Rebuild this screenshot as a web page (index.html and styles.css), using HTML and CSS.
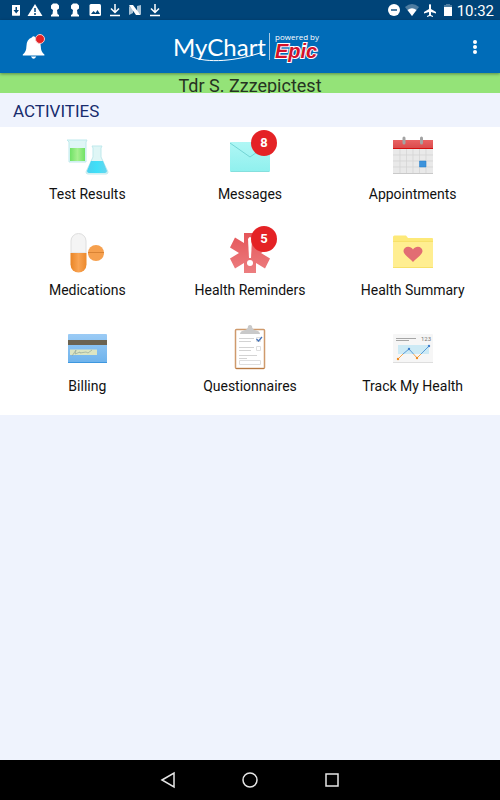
FILE: index.html
```html
<!DOCTYPE html>
<html lang="en">
  <head>
    <meta charset="UTF-8" />
    <meta name="viewport" content="width=device-width, initial-scale=1.0" />
    <title>MyChart</title>
    <link rel="stylesheet" href="styles.css">
  </head>
  <body>
    <!-- Status bar -->
    <div class="status-bar">
      <div class="status-left">
        <svg viewBox="0 0 20 20"><path fill="#fff" fill-rule="evenodd" d="M7 5h8v10.500H12V6zM7 5h5v1H12v9.500H7z" /><rect x="7" y="5" width="8" height="10.500" rx="1" fill="#fff" transform="translate(0 0)" /><path fill="#004478" d="M10.500 7h1.500v3h2l-2.800 3.500L8.500 10h2z" /></svg>
        <svg viewBox="0 0 20 20"><path fill="#fff" d="M10 4l6.500 12h-13z" transform="translate(-1.500 0) scale(1.150 1)" /><path stroke="#004478" stroke-width="1.500" d="M10 8v4M10 13v2" /></svg>
        <svg viewBox="0 0 20 20"><path fill="#fff" d="M8 3.500h4l2 2v3l-2 1.500.5 4 1.500 1v1.500H6V15l1.500-1 .5-4-2-1.500v-3z" /></svg>
        <svg viewBox="0 0 20 20"><path fill="#fff" d="M8 3.500h4l2 2v3l-2 1.500.5 4 1.500 1v1.500H6V15l1.500-1 .5-4-2-1.500v-3z" /></svg>
        <svg viewBox="0 0 20 20"><rect x="4.500" y="4" width="11.500" height="12" rx="1.500" fill="#fff" /><path fill="#004478" d="M6 14l2.500-3 2 2 2-3 2.500 4z" /></svg>
        <svg viewBox="0 0 20 20"><path fill="none" stroke="#fff" stroke-width="1.500" d="M10 4v8M6 8.500l4 4 4-4M5 15.500h10" /></svg>
        <svg viewBox="0 0 20 20"><path fill="#a9c3d6" d="M4 6l4 3v4l-4 2zM12 6l4-1v10l-4-3z" /><path fill="#fff" d="M4 5h4l7.500 10H11z" /></svg>
        <svg viewBox="0 0 20 20"><path fill="none" stroke="#fff" stroke-width="1.500" d="M10 4v8M6 8.500l4 4 4-4M5 15.500h10" /></svg>
      </div>
      <div class="status-right">
        <svg viewBox="0 0 18 20"><circle cx="9" cy="10" r="6" fill="#fff" /><path stroke="#4d7ca0" stroke-width="2" d="M6 10h6" /></svg>
        <svg viewBox="0 0 18 20"><path fill="#4d7ca0" d="M9 16L2 7q7-6 14 0z" /><path fill="#fff" d="M9 16L4.500 10q4.500-3.500 9 0z" /></svg>
        <svg viewBox="0 0 18 20"><path fill="#fff" d="M8 5q1-2 2 0v4l5 3v1.500L10 12v3l2 1v1l-3-1-3 1v-1l2-1v-3l-5 1.500V12l5-3z" /></svg>
        <svg viewBox="0 0 18 20"><path fill="#4d7ca0" d="M7 4h4v1h2v3H5V5h2z" /><path fill="#fff" d="M5 7h8v9H5z" /></svg>
        <span class="clock">10:32</span>
      </div>
    </div>

    <header class="app-header">
      <button class="icon-button" aria-label="Notifications">
        <svg width="28" height="32" viewBox="0 0 28 32">
          <path fill="#fff" d="M12 5q2-3 4 0 6 2 6 10 0 6 4 9v1H2v-1q4-3 4-9 0-8 6-10zM11 26h6q-3 5-6 0z" transform="translate(2 2) scale(.9)" />
          <circle cx="21" cy="8" r="4.500" fill="#e32326" stroke="#f5c9ca" />
        </svg>
      </button>
      <div class="logo">
        <div class="logo-name">
          MyChart
          <svg class="swoosh" width="76" height="12" viewBox="0 0 76 12"><path fill="none" stroke="#fff" d="M1 6C18 14 48 11 74 2" /></svg>
        </div>
        <div class="logo-epic">
          <span class="powered">powered by</span>
          <span class="epic">Epic</span>
        </div>
      </div>
      <button class="icon-button" aria-label="More options">
        <svg width="28" height="32" viewBox="0 0 28 32">
          <g fill="#fff"><circle cx="14" cy="11" r="2" /><circle cx="14" cy="16" r="2" /><circle cx="14" cy="21" r="2" /></g>
        </svg>
      </button>
    </header>

    <div class="patient">Tdr S. Zzzepictest</div>

    <main>
      <h2>ACTIVITIES</h2>
      <div class="activities">
        <button class="tile">
          <span class="icon">
            <svg viewBox="0 0 40 40">
              <defs>
                <linearGradient id="green"><stop offset="0" stop-color="#70e266" /><stop offset=".5" stop-color="#a6f090" /><stop offset="1" stop-color="#70e266" /></linearGradient>
                <linearGradient id="cyan"><stop offset="0" stop-color="#4ccfee" /><stop offset=".5" stop-color="#3fe0f8" /><stop offset="1" stop-color="#68d4ee" /></linearGradient>
              </defs>
              <path fill="#dff6f6" stroke="#bfe9ec" d="M0 4h20l-1 2v20H2V6z" />
              <path fill="url(#green)" d="M3 12h15v13H3z" />
              <path fill="#dff6f6" stroke="#bfe9ec" d="M25 10h10l-1 2v9l7 15q0 2-2 2H21q-2 0-2-2l7-15v-9z" />
              <path fill="url(#cyan)" d="M24 25h12l4 10q0 2-2 2H22q-2 0-2-2z" />
            </svg>
          </span>
          Test Results
        </button>

        <button class="tile">
          <span class="icon">
            <svg viewBox="0 0 40 40">
              <defs><linearGradient id="mail" x2="0" y2="1"><stop offset="0" stop-color="#b0f7f5" /><stop offset="1" stop-color="#8ff0ee" /></linearGradient></defs>
              <rect y="6" width="40" height="30" rx="1" fill="url(#mail)" />
              <path fill="none" stroke="#73d5d5" d="M0 7l20 14L40 7" />
              <path stroke="#85dfdd" d="M1 35.500h38" />
            </svg>
            <span class="badge">8</span>
          </span>
          Messages
        </button>

        <button class="tile">
          <span class="icon">
            <svg viewBox="0 0 40 40">
              <defs><linearGradient id="red" x2="0" y2="1"><stop offset="0" stop-color="#e96364" /><stop offset="1" stop-color="#d94849" /></linearGradient></defs>
              <rect y="4" width="40" height="34" rx="1" fill="#e9e9e9" />
              <path stroke="#d3d3d3" stroke-width=".7" d="M7 13v24M13.500 13v24M20 13v24M26.500 13v24M33 13v24M0 19h40M0 25h40M0 31h40" />
              <path stroke="#c9c9c9" d="M0 37.500h40" />
              <path fill="url(#red)" d="M0 4h40v9H0z" /><path stroke="#d41010" d="M0 12.500h40" />
              <path stroke="#a3a3a3" stroke-width="3" stroke-linecap="round" d="M11 2v5M28.500 2v5" />
              <path fill="#3d93dc" stroke="#247fca" stroke-width=".5" d="M26.500 25H33v6h-6.500z" />
            </svg>
          </span>
          Appointments
        </button>

        <button class="tile">
          <span class="icon">
            <svg viewBox="0 0 40 40">
              <defs>
                <linearGradient id="orange"><stop offset="0" stop-color="#e98526" /><stop offset=".5" stop-color="#f9a453" /><stop offset="1" stop-color="#ec892c" /></linearGradient>
              </defs>
              <path fill="#f4f4f4" stroke="#dedede" d="M4 21V9a7.500 7.500 0 0 1 15 0v12z" />
              <path fill="url(#orange)" d="M3.500 21h16v11.500a8 8 0 0 1-16 0z" />
              <circle cx="29" cy="21" r="8" fill="#f6a04e" />
              <path stroke="#d98334" d="M21 20.500h16" />
            </svg>
          </span>
          Medications
        </button>

        <button class="tile">
          <span class="icon">
            <svg viewBox="0 0 40 40">
              <defs><linearGradient id="star" x2="0" y2="1"><stop offset="0" stop-color="#e55559" /><stop offset="1" stop-color="#ec7e80" /></linearGradient></defs>
              <path fill="url(#star)" d="M14 1h12v10l9-5.500 5 10L31 21l9 5.500-5 10L26 31v10H14V31l-9 5.500-5-10L9 21l-9-5.500 5-10L14 11z" />
              <path fill="#fff" d="M18 7q2-4 4 0l-1 19h-2z" /><circle cx="20" cy="31" r="3" fill="#fff" />
            </svg>
            <span class="badge">5</span>
          </span>
          Health Reminders
        </button>

        <button class="tile">
          <span class="icon">
            <svg viewBox="0 0 40 40">
              <path fill="#fde979" d="M0 5q0-1.500 1.500-1.500H13L15 6h24q1 0 1 1v28q0 1-1 1H1q-1 0-1-1z" />
              <path fill="#ffee91" d="M0 10h40v25H0z" /><path stroke="#f7e16a" d="M0 9.500h40M0 35.500h40" />
              <path fill="#e26d73" d="M20 30C17 26 10.500 23 10.500 19c0-5 7-6 9.500-1.500C22.500 13 29.500 14 29.500 19c0 4-6.500 7-9.500 11z" />
            </svg>
          </span>
          Health Summary
        </button>

        <button class="tile">
          <span class="icon">
            <svg viewBox="0 0 40 40">
              <defs><linearGradient id="card" x2="0" y2="1"><stop offset="0" stop-color="#9bcbf5" /><stop offset="1" stop-color="#6eb3ec" /></linearGradient></defs>
              <rect x="1" y="6" width="39" height="29" rx="1" fill="url(#card)" />
              <path fill="#6b6250" d="M1 12h39v5H1z" />
              <path stroke="#3d97df" d="M1 34.500h39" />
              <path fill="#dce5c2" d="M3 21.500h27v5.500H3z" />
              <path fill="none" stroke="#93a79a" stroke-width=".7" d="M5 28l4-6-1 4 5-2v1l6-1 2 1 4-3" />
            </svg>
          </span>
          Billing
        </button>

        <button class="tile">
          <span class="icon">
            <svg viewBox="0 0 40 40">
              <rect x="5.500" y="1.500" width="29" height="39" rx="1" fill="#fff" stroke="#cf9a6c" stroke-width="1.500" />
              <path stroke="#b97b44" d="M6 40.500h28" />
              <path fill="#c9c9c9" d="M10 6q0-3 5-4 3-1 3-4 2-2 4 0 0 3 3 4 5 1 5 4z" />
              <path stroke="#d3d3d3" d="M9 10.500h15M9 13.500h12M9 19.500h15M9 22.500h12M9 27.500h18M9 30.500h8" />
              <path fill="none" stroke="#dedede" d="M26.500 18.500h4v4h-4zM9.500 32.500h21v4h-21z" />
              <path fill="none" stroke="#dedede" d="M26.500 9.500h4v4h-4z" />
              <path fill="none" stroke="#4472b8" stroke-width="1.200" d="M26.500 11l2 2 3.500-4" />
            </svg>
          </span>
          Questionnaires
        </button>

        <button class="tile">
          <span class="icon">
            <svg viewBox="0 0 40 40">
              <rect y="6" width="40" height="29" rx="1" fill="#f6f6f6" /><path stroke="#dedede" d="M0 34.500h40" />
              <path stroke="#a6a6a6" d="M3 10.500h20M3 12.500h13" />
              <text x="28" y="13" class="chart-text">123</text>
              <path fill="#cdeaf5" d="M5 17h31v9H5z" />
              <path fill="none" stroke="#5a9bd5" d="M10 26l6-5 4.500 5M28 26l8-8" />
              <path fill="none" stroke="#f2a64c" d="M5 31l5-5M20.500 26l3.500 4 4-4" />
              <g fill="#3f7fce"><circle cx="16" cy="21" r="1.200" /><circle cx="36" cy="18" r="1.200" /></g>
              <g fill="#f08c22"><circle cx="5" cy="31" r="1.200" /><circle cx="24" cy="30" r="1.200" /></g>
            </svg>
          </span>
          Track My Health
        </button>
      </div>
    </main>

    <nav class="nav-bar">
      <button class="nav-button" aria-label="Back"><svg viewBox="0 0 24 24"><path d="M6 12l12-7v14z" /></svg></button>
      <button class="nav-button" aria-label="Home"><svg viewBox="0 0 24 24"><circle cx="12" cy="12" r="7" /></svg></button>
      <button class="nav-button" aria-label="Recent apps"><svg viewBox="0 0 24 24"><path d="M6 6h12v12H6z" /></svg></button>
    </nav>
  </body>
</html>
```
FILE: styles.css
```css
* {
  box-sizing: border-box;
}
body {
  display: flex;
  flex-direction: column;
  min-height: 100vh;
  margin: 0;
  font-family: Roboto, sans-serif;
  background-color: #eff3fd;
}
button {
  padding: 0;
  border: none;
  background: none;
  font-family: inherit;
  cursor: pointer;
}
svg {
  display: block;
  overflow: visible;
}

/* Status bar */
.status-bar {
  display: flex;
  justify-content: space-between;
  height: 20px;
  padding: 0 6px 0 5px;
  background-color: #004478;
}
.status-left,
.status-right {
  display: flex;
}
.status-left svg {
  width: 20px;
  height: 20px;
}
.status-right svg {
  width: 18px;
  height: 20px;
}
.clock {
  color: #fff;
  font-size: 15px;
  line-height: 22px;
}

/* Header */
.app-header {
  display: flex;
  align-items: center;
  justify-content: space-between;
  height: 53px;
  padding: 0 11px 0 19px;
  background-color: #006cb8;
  box-shadow: 0 1px 3px rgba(0, 0, 0, 0.4);
  z-index: 1;
}
.logo {
  display: flex;
  align-items: center;
  margin-right: 16px;
  color: #fff;
}
.logo-name {
  position: relative;
  padding-right: 3px;
  border-right: 1px solid #a5c9e4;
  font-family: Lato, sans-serif;
  font-size: 24px;
  line-height: 27px;
}
.swoosh {
  position: absolute;
  left: 16px;
  bottom: -2px;
}
.logo-epic {
  display: flex;
  flex-direction: column;
  padding-left: 5px;
}
.powered {
  font-family: "Open Sans", sans-serif;
  font-size: 8px;
  line-height: 9px;
}
.epic {
  color: #d3122a;
  font-family: "Liberation Sans", sans-serif;
  font-size: 20px;
  font-style: italic;
  font-weight: bold;
  line-height: 20px;
  -webkit-text-stroke: 2px #fff;
  paint-order: stroke fill;
}

.patient {
  height: 20px;
  overflow: hidden;
  background-color: #94e378;
  color: #263322;
  font-size: 18px;
  line-height: 26px;
  text-align: center;
}

/* Activities */
main {
  flex: 1;
}
h2 {
  margin: 0;
  padding: 3px 13px 0;
  color: #172b6d;
  font-size: 17px;
  font-weight: normal;
  line-height: 31px;
}
.activities {
  display: grid;
  grid-template-columns: repeat(3, 1fr);
  padding: 0 6px;
  background-color: #fff;
}
.tile {
  display: flex;
  flex-direction: column;
  align-items: center;
  gap: 8px;
  padding: 9px 0 19px;
  color: #111;
  font-size: 14px;
  line-height: 20px;
}
.icon {
  position: relative;
  width: 40px;
  height: 40px;
}
.badge {
  position: absolute;
  top: -6px;
  left: 21px;
  width: 26px;
  height: 26px;
  border-radius: 50%;
  background-color: #e42225;
  color: #fff;
  font-size: 13px;
  font-weight: bold;
  line-height: 26px;
}
.chart-text {
  fill: #777;
  font-size: 6px;
}

/* Navigation bar */
.nav-bar {
  display: flex;
  align-items: center;
  justify-content: center;
  gap: 58px;
  height: 40px;
  background-color: #000;
}
.nav-button svg {
  width: 24px;
  height: 24px;
  fill: none;
  stroke: #e6e6e6;
  stroke-width: 1.5;
}
```
